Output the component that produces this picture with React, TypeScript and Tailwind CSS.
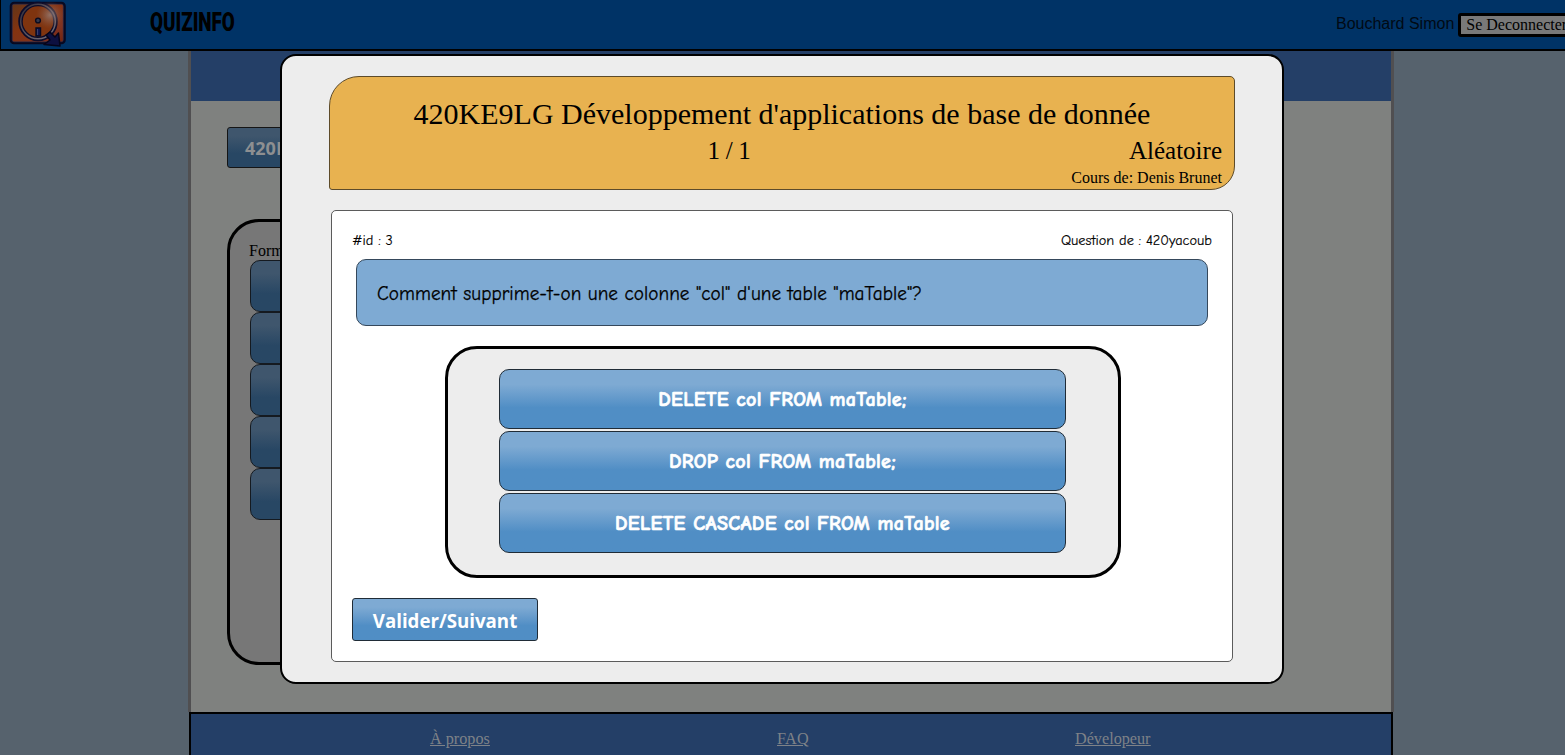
const serif = "font-['Liberation_Serif',serif]";
const hand = "font-['Comic_Sans_MS','Comic_Neue','Open_Sans',sans-serif]";

const answers = [
  'DELETE col FROM maTable;',
  'DROP col FROM maTable;',
  'DELETE CASCADE col FROM maTable',
];

function Logo() {
  return (
    <svg width="60" height="48" viewBox="0 0 60 48" className="shrink-0">
      <defs>
        <linearGradient id="plate" x1="0" y1="0" x2="1" y2="1">
          <stop offset="0" stopColor="#5f3519" />
          <stop offset="0.4" stopColor="#853310" />
          <stop offset="0.75" stopColor="#803320" />
          <stop offset="1" stopColor="#6f210c" />
        </linearGradient>
        <linearGradient id="ring" x1="0" y1="0" x2="1" y2="1">
          <stop offset="0" stopColor="#2c2a38" />
          <stop offset="0.5" stopColor="#5c5560" />
          <stop offset="1" stopColor="#77707a" />
        </linearGradient>
        <radialGradient id="shine">
          <stop offset="0" stopColor="#9a8a88" stopOpacity="0.7" />
          <stop offset="1" stopColor="#8a5b4a" stopOpacity="0" />
        </radialGradient>
      </defs>
      <rect x="4" y="3" width="53.5" height="40" rx="3" fill="url(#plate)" stroke="#080921" strokeWidth="2.6" />
      <rect x="5.2" y="4.2" width="51" height="37.6" rx="2" fill="none" stroke="#3a3350" strokeWidth="0.6" />
      <circle cx="31" cy="21.500" r="17.500" fill="#7f340f" stroke="#0c0b29" strokeWidth="4.5" />
      <circle cx="31" cy="21.500" r="17.300" fill="none" stroke="url(#ring)" strokeWidth="1.5" />
      <path d="M37 44.500L43 40l-4-5 4-3 5 5 3.500-4 1.500 13z" fill="#0d1040" stroke="#05051a" strokeWidth="1.5" strokeLinejoin="round" />
      <circle cx="43" cy="15" r="14" fill="url(#shine)" />
      <circle cx="31" cy="20.500" r="2.400" fill="#34384b" stroke="#090b20" strokeWidth="1.4" />
      <path d="M29 28h4.500v8h-4.500z" fill="#101650" stroke="#080a22" strokeWidth="1.400" />
      <path d="M30.500 29v6" stroke="#454a70" strokeWidth="0.8" />
    </svg>
  );
}

function Header() {
  return (
    <header className="flex h-[51px] shrink-0 border-b-2 border-l border-black bg-[#003366]">
      <div className="w-[150px] shrink-0 pl-[6px]">
        <Logo />
      </div>
      <div className="w-[1185px] shrink-0 pt-[4px]">
        <span className="-ml-px inline-block origin-left scale-x-[0.705] font-['Roboto',sans-serif] text-[26.7px] leading-[37px] font-black">
          QUIZINFO
        </span>
      </div>
      <span className="shrink-0 pt-[12px] font-['Liberation_Sans',sans-serif] text-base leading-6 whitespace-nowrap text-[#000a14]">
        Bouchard Simon
      </span>
      <button className={`mt-[13px] ml-[4px] h-6 w-[120px] shrink-0 rounded-[3px] border-3 border-black bg-[#797979] pl-[5px] text-left text-base leading-[18px] whitespace-nowrap ${serif}`}>
        Se Deconnecter
      </button>
    </header>
  );
}

function Background() {
  return (
    <div className="flex h-[704px] flex-col pl-[188px]">
      <main className="h-[661px] w-[1206px] border-x-3 border-[#504f51] bg-[#7f817f]">
        <div className="h-[50px] bg-[#243f67]" />
        <div className="flex flex-col pt-[26px] pl-[36px]">
          <button className="h-[41px] w-[186px] rounded-[3px] border border-[#151515] bg-linear-to-b from-[#3f566d] from-20% to-[#284764] to-65% pl-[17px] text-left font-['Open_Sans',sans-serif] text-lg font-bold text-[#8d8f91]">
            420KE9LG
          </button>
          <section className="mt-[51px] h-[446px] w-[900px] rounded-[32px] border-3 border-black bg-[#777777] pt-[20px] pl-[20px]">
            <p className={`-ml-px h-[18px] text-base leading-[18px] ${serif}`}>Formation</p>
            {[0, 1, 2, 3, 4].map((n) => (
              <div key={n} className="h-[52px] w-[567px] rounded-[10px] border border-[#151a20] bg-linear-to-b from-[#3f566d] from-25% to-[#284764] to-65%" />
            ))}
          </section>
        </div>
      </main>
      <footer className={`ml-px flex h-[43px] w-[1204px] border-2 border-b-0 border-black bg-[#243f67] pt-[16px] pl-[239px] text-[16.2px] leading-[18px] text-[#7e8288] underline ${serif}`}>
        <a className="w-[347px]">À propos</a>
        <a className="w-[298px] tracking-[0.3px]">FAQ</a>
        <a>Dévelopeur</a>
      </footer>
    </div>
  );
}

function QuizDialog() {
  return (
    <div role="dialog" className="absolute top-[54px] left-[280px] flex h-[630px] w-[1004px] flex-col items-center rounded-[16px] border-2 border-black bg-[#ededed] pt-[20px]">
      <div className={`flex h-[114px] w-[906px] shrink-0 flex-col rounded-tl-[30px] rounded-tr-[5px] rounded-br-[24px] rounded-bl-[3px] border border-[#5d4b2a] bg-[#e8b250] px-3 pt-[19px] ${serif}`}>
        <h1 className="text-center text-[30px] leading-[36px] whitespace-nowrap">
          420KE9LG Développement d'applications de base de donnée
        </h1>
        <div className="grid h-[37px] grid-cols-[1fr_auto_1fr] text-[25px] leading-[38px]">
          <span />
          <span className="-translate-x-[53px] tracking-[-0.3px]">1 / 1</span>
          <span className="text-right">Aléatoire</span>
        </div>
        <p className="text-right text-base leading-[18px]">Cours de: Denis Brunet</p>
      </div>
      <div className="mt-[20px] flex h-[452px] w-[902px] shrink-0 flex-col rounded-[5px] border border-[#5b5b5b] bg-white px-[20px] pt-[20px]">
        <div className={`flex h-[28px] justify-between text-[14.3px] leading-[19px] [-webkit-text-stroke:0.15px_black] ${hand}`}>
          <span>#id : 3</span>
          <span>Question de : 420yacoub</span>
        </div>
        <div className={`mx-1 flex h-[67px] shrink-0 items-center rounded-[10px] border border-[#35485b] bg-[#7eaad3] pt-[4px] pl-[20px] text-[19.2px] tracking-[0.06px] [-webkit-text-stroke:0.25px_black] ${hand}`}>
          Comment supprime-t-on une colonne "col" d'une table "maTable"?
        </div>
        <div className="mt-[20px] ml-[93px] flex h-[232px] w-[676px] shrink-0 flex-col gap-[2px] rounded-[32px] border-3 border-black bg-[#ededed] pt-[20px] pl-[51px]">
          {answers.map((text) => (
            <button key={text} className={`h-[60px] w-[567px] rounded-[10px] border border-[#202c37] bg-linear-to-b from-[#7eaad3] from-25% to-[#508ec5] to-65% pt-[2px] text-[20px] font-bold tracking-[0.32px] text-white [-webkit-text-stroke:0.7px_white] ${hand}`}>
              {text}
            </button>
          ))}
        </div>
        <button className="mt-[20px] h-[43px] w-[186px] shrink-0 rounded-[3px] border border-[#202c37] bg-linear-to-b from-[#7eaad3] from-20% to-[#508ec5] to-65% pt-[3px] font-['Open_Sans',sans-serif] text-[18.7px] font-bold text-white">
          Valider/Suivant
        </button>
      </div>
    </div>
  );
}

export default function App() {
  return (
    <div className="relative flex h-[755px] w-full flex-col overflow-hidden bg-[#56626d] text-black">
      <Header />
      <Background />
      <QuizDialog />
    </div>
  );
}
